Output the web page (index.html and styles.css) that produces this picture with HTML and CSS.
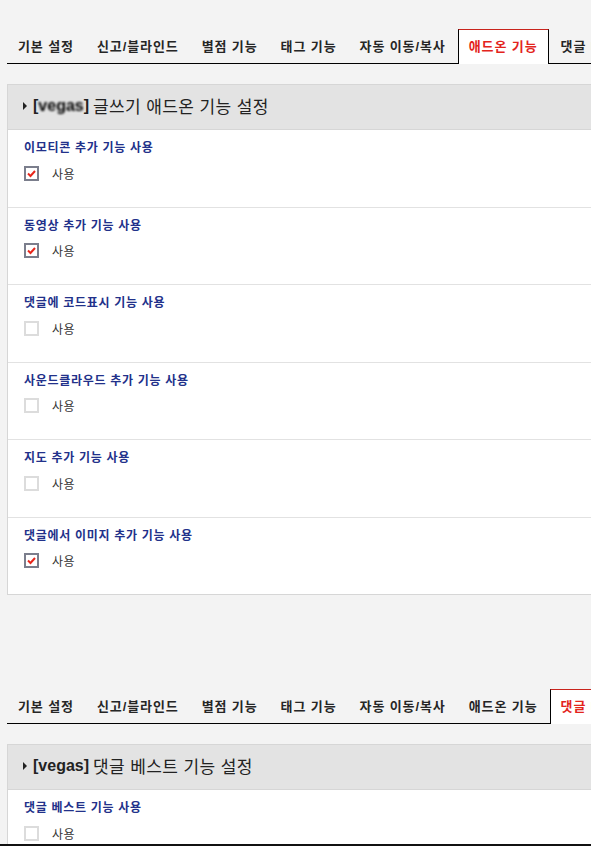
FILE: index.html
```html
<!DOCTYPE html>
<html lang="ko">
  <head>
    <meta charset="UTF-8" />
    <title>애드온 기능 설정</title>
    <link rel="stylesheet" href="styles.css">
  </head>
  <body>
    <div class="page">
      <!-- 애드온 기능 -->
      <section class="block">
        <ul class="tabs">
          <li>기본 설정</li>
          <li>신고/블라인드</li>
          <li>별점 기능</li>
          <li>태그 기능</li>
          <li>자동 이동/복사</li>
          <li class="active">애드온 기능</li>
          <li>댓글 베스트</li>
        </ul>
        <div class="panel">
          <h2 class="panel-head"><span class="arrow"></span><b>[<span class="masked">vegas</span>]</b> 글쓰기 애드온 기능 설정</h2>
          <div class="row">
            <p class="label">이모티콘 추가 기능 사용</p>
            <label class="option"><span class="box checked"><svg viewBox="0 0 11 11" width="11" height="11"><path d="M2 5.5 L4.5 8 L9 3" fill="none" stroke="#e8261b" stroke-width="2"/></svg></span>사용</label>
          </div>
          <div class="row">
            <p class="label">동영상 추가 기능 사용</p>
            <label class="option"><span class="box checked"><svg viewBox="0 0 11 11" width="11" height="11"><path d="M2 5.5 L4.5 8 L9 3" fill="none" stroke="#e8261b" stroke-width="2"/></svg></span>사용</label>
          </div>
          <div class="row">
            <p class="label">댓글에 코드표시 기능 사용</p>
            <label class="option"><span class="box"></span>사용</label>
          </div>
          <div class="row">
            <p class="label">사운드클라우드 추가 기능 사용</p>
            <label class="option"><span class="box"></span>사용</label>
          </div>
          <div class="row">
            <p class="label">지도 추가 기능 사용</p>
            <label class="option"><span class="box"></span>사용</label>
          </div>
          <div class="row">
            <p class="label">댓글에서 이미지 추가 기능 사용</p>
            <label class="option"><span class="box checked"><svg viewBox="0 0 11 11" width="11" height="11"><path d="M2 5.5 L4.5 8 L9 3" fill="none" stroke="#e8261b" stroke-width="2"/></svg></span>사용</label>
          </div>
        </div>
      </section>

      <!-- 댓글 베스트 -->
      <section class="block block-next">
        <ul class="tabs">
          <li>기본 설정</li>
          <li>신고/블라인드</li>
          <li>별점 기능</li>
          <li>태그 기능</li>
          <li>자동 이동/복사</li>
          <li>애드온 기능</li>
          <li class="active">댓글 베스트</li>
        </ul>
        <div class="panel">
          <h2 class="panel-head"><span class="arrow"></span><b>[vegas]</b> 댓글 베스트 기능 설정</h2>
          <div class="row">
            <p class="label">댓글 베스트 기능 사용</p>
            <label class="option"><span class="box"></span>사용</label>
          </div>
        </div>
      </section>
    </div>
    <div class="edge"></div>
  </body>
</html>
```

FILE: styles.css
```css
html,
body {
  margin: 0;
  padding: 0;
  background-color: #f3f3f3;
  overflow: hidden;
}
body {
  font-family: "Liberation Sans", "Noto Sans CJK KR", sans-serif;
  color: #333;
}
.page {
  padding: 29px 0 0 7px;
  width: 700px;
}
.block-next {
  margin-top: 94px;
}
.tabs {
  list-style: none;
  margin: 0;
  padding: 0;
  display: flex;
  white-space: nowrap;
  border-bottom: 1px solid #000;
  height: 34px;
}
.tabs li {
  box-sizing: border-box;
  height: 35px;
  margin: 0 1px -1px 0;
  padding: 0 10px 0 10px;
  border: 1px solid transparent;
  border-bottom: 0;
  font-size: 13px;
  font-weight: bold;
  letter-spacing: 0.9px;
  line-height: 33px;
  color: #262626;
}
.tabs li.active {
  background-color: #fff;
  border-color: #000;
  border-top-color: #c8231c;
  color: #e3241c;
}
.panel {
  margin-top: 20px;
  background-color: #fff;
  border: 1px solid #d6d6d6;
}
.panel-head {
  box-sizing: border-box;
  display: flex;
  align-items: center;
  gap: 6px;
  margin: 0;
  height: 45px;
  padding: 0 0 3px 15px;
  background-color: #e3e3e3;
  border-bottom: 1px solid #d6d6d6;
  font-size: 17px;
  font-weight: normal;
  letter-spacing: 0.4px;
  color: #222;
}
.panel-head b {
  font-size: 16px;
  font-weight: bold;
  letter-spacing: 0;
  margin-right: -2px;
}
.masked {
  color: #000;
  filter: blur(1.3px);
}
.arrow {
  width: 0;
  height: 0;
  border-top: 4px solid transparent;
  border-bottom: 4px solid transparent;
  border-left: 4px solid #222;
}
.row {
  box-sizing: border-box;
  height: 77.5px;
  padding: 10px 16px 0;
  border-bottom: 1px solid #e2e2e2;
}
.row:last-child {
  border-bottom: 0;
  height: 76.5px;
}
.label {
  margin: 0;
  font-size: 12px;
  line-height: 16px;
  font-weight: bold;
  letter-spacing: 0.7px;
  color: #22318a;
}
.option {
  display: flex;
  align-items: center;
  gap: 13px;
  margin-top: 8px;
  height: 18px;
  font-size: 12px;
  letter-spacing: 0.4px;
  color: #333;
}
.box {
  box-sizing: border-box;
  display: flex;
  align-items: center;
  justify-content: center;
  width: 15px;
  height: 15px;
  border: 2px solid #dcdcdc;
  background-color: #fff;
}
.box.checked {
  border-color: #7b7e8c;
}
.edge {
  position: fixed;
  left: 0;
  right: 0;
  bottom: 0;
  height: 2px;
  background-color: #111;
}
```
